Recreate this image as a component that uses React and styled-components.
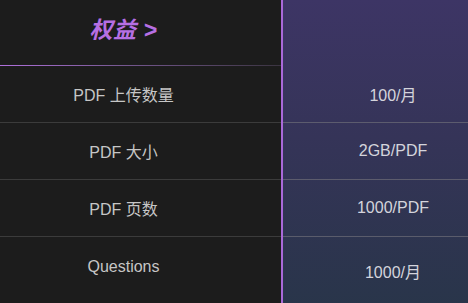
import React from 'react';
import styled, { createGlobalStyle } from 'styled-components';

const GlobalStyle = createGlobalStyle`
  html, body {
    margin: 0;
    padding: 0;
    background: #1c1c1c;
    overflow: hidden;
  }
  body {
    font-family: "Liberation Sans", Arial, "Noto Sans CJK SC", sans-serif;
  }
`;

const TableStyle = styled.div`
  display: grid;
  grid-template-columns: 281px 1fr;
  width: 468px;
  height: 303px;
  overflow: hidden;
  background: #1c1c1c;
`;

const LeftColumn = styled.div`
  display: flex;
  flex-direction: column;
`;

const RightColumn = styled.div`
  display: flex;
  flex-direction: column;
  border-left: 2px solid #a969d9;
  background: linear-gradient(180deg, #3d3565 0%, #353458 45%, #29354a 100%);
`;

const HeaderCell = styled.div`
  height: 66px;
  flex-shrink: 0;
  box-sizing: border-box;
  display: flex;
  align-items: center;
  justify-content: center;
  padding-right: ${props => props.$shift || 0}px;
  padding-bottom: 10px;
  position: relative;

  h1 {
    margin: 0;
    font-size: 23px;
    font-weight: bold;
    font-style: italic;
    color: #b66fe3;
    letter-spacing: 0.5px;
  }

  &::after {
    content: '';
    display: ${props => props.$line ? 'block' : 'none'};
    position: absolute;
    left: 0;
    right: 0;
    bottom: 0;
    height: 1px;
    background: linear-gradient(90deg, #b070dc 0%, #7a5a96 40%, #3a3440 100%);
  }
`;

const Row = styled.div`
  height: ${props => props.$height || 57}px;
  flex-shrink: 0;
  box-sizing: border-box;
  display: flex;
  align-items: center;
  justify-content: center;
  padding-right: ${props => props.$shiftRight || 0}px;
  padding-left: ${props => props.$shiftLeft || 0}px;
  border-bottom: ${props => props.$last ? 'none' : '1px solid ' + props.$lineColor};
  font-size: 16px;
  color: ${props => props.$color};
  white-space: nowrap;
`;

const features = [
  { name: 'PDF 上传数量', value: '100/月' },
  { name: 'PDF 大小', value: '2GB/PDF' },
  { name: 'PDF 页数', value: '1000/PDF' },
  { name: 'Questions', value: '1000/月' },
];

export default function App() {
  return (
    <>
      <GlobalStyle />
      <TableStyle>
        <LeftColumn>
          <HeaderCell $line $shift={34}>
            <h1>权益 &gt;</h1>
          </HeaderCell>
          {features.map((f, i) => (
            <Row
              key={i}
              $shiftRight={34}
              $color="#c6c6c6"
              $lineColor="#3b3b3b"
              $last={i === features.length - 1}
              $height={i === features.length - 1 ? 60 : 57}
            >
              {f.name}
            </Row>
          ))}
        </LeftColumn>
        <RightColumn>
          <HeaderCell />
          {features.map((f, i) => (
            <Row
              key={i}
              $shiftLeft={35}
              $color="#d4d4dc"
              $lineColor="rgba(110, 110, 120, 0.7)"
              $last={i === features.length - 1}
              $height={i === features.length - 1 ? 68 : 57}
            >
              {f.value}
            </Row>
          ))}
        </RightColumn>
      </TableStyle>
    </>
  );
}
